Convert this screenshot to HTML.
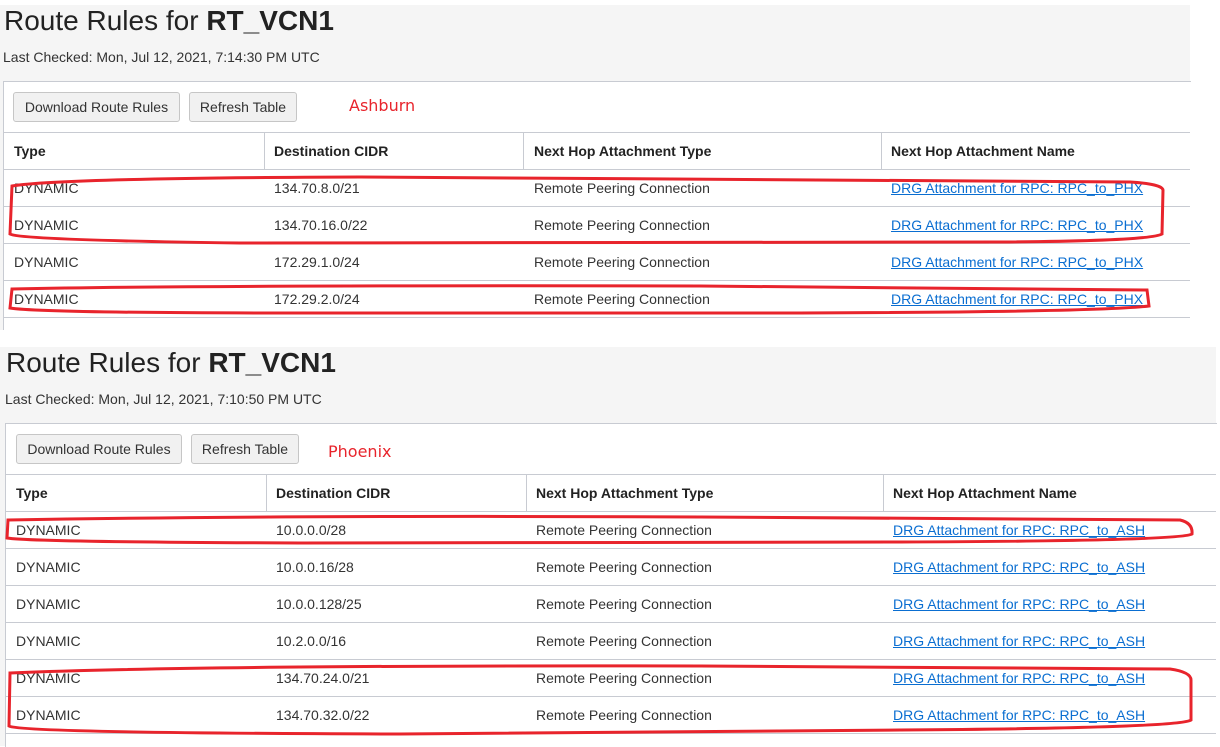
<!DOCTYPE html>
<html><head><style>
body{margin:0;width:1220px;height:746px;background:#fff;position:relative;overflow:hidden;font-family:"Liberation Sans",sans-serif;color:#333}
div,span,a{position:absolute}
.g{background:#f5f5f5}
.t{font-size:28px;color:#222;white-space:nowrap}
.lc{font-size:14px;color:#333;white-space:nowrap}
.box{background:#fff;border-left:1px solid #c8cbd2;border-top:1px solid #c8cbd2}
.btn{background:#f1f1f1;border:1px solid #c6c6c6;border-radius:3px;font-size:14px;color:#333;text-align:center;line-height:28px}
.hl{height:1px;background:#c8cbd2}
.vl{width:1px;background:#c8cbd2}
.c{font-size:14px;white-space:nowrap;line-height:16px;color:#333;margin-top:-1px}
.h{font-weight:bold;color:#222}
a.c{color:#0a6ed1;text-decoration:underline}
.red{font-family:"DejaVu Sans",sans-serif;color:#e8242c;font-size:16px}
</style></head><body>
<div class="g" style="left:0;top:5px;width:1190px;height:325px"></div>
<div class="t" style="left:4px;top:5px">Route Rules for <b>RT_VCN1</b></div>
<div class="lc" style="left:3px;top:49px">Last Checked: Mon, Jul 12, 2021, 7:14:30 PM UTC</div>
<div class="box" style="left:3px;top:81px;width:1187px;height:249px"></div>
<div class="btn" style="left:13px;top:92px;width:165px;height:28px">Download Route Rules</div>
<div class="btn" style="left:189px;top:92px;width:106px;height:28px">Refresh Table</div>
<div class="red" style="left:349px;top:96px">Ashburn</div>
<div class="hl" style="left:4px;top:132px;width:1186px"></div>
<div class="vl" style="left:264px;top:132px;height:37px"></div>
<div class="vl" style="left:523px;top:132px;height:37px"></div>
<div class="vl" style="left:881px;top:132px;height:37px"></div>
<div class="hl" style="left:4px;top:169px;width:1186px"></div>
<div class="hl" style="left:4px;top:206px;width:1186px"></div>
<div class="hl" style="left:4px;top:243px;width:1186px"></div>
<div class="hl" style="left:4px;top:280px;width:1186px"></div>
<div class="hl" style="left:4px;top:317px;width:1186px"></div>
<span class="c h" style="left:14px;top:144px">Type</span>
<span class="c h" style="left:274px;top:144px">Destination CIDR</span>
<span class="c h" style="left:534px;top:144px">Next Hop Attachment Type</span>
<span class="c h" style="left:891px;top:144px">Next Hop Attachment Name</span>

<span class="c" style="left:14px;top:181px">DYNAMIC</span><span class="c" style="left:274px;top:181px">134.70.8.0/21</span><span class="c" style="left:534px;top:181px">Remote Peering Connection</span><a class="c" style="left:891px;top:181px">DRG Attachment for RPC: RPC_to_PHX</a>
<span class="c" style="left:14px;top:218px">DYNAMIC</span><span class="c" style="left:274px;top:218px">134.70.16.0/22</span><span class="c" style="left:534px;top:218px">Remote Peering Connection</span><a class="c" style="left:891px;top:218px">DRG Attachment for RPC: RPC_to_PHX</a>
<span class="c" style="left:14px;top:255px">DYNAMIC</span><span class="c" style="left:274px;top:255px">172.29.1.0/24</span><span class="c" style="left:534px;top:255px">Remote Peering Connection</span><a class="c" style="left:891px;top:255px">DRG Attachment for RPC: RPC_to_PHX</a>
<span class="c" style="left:14px;top:292px">DYNAMIC</span><span class="c" style="left:274px;top:292px">172.29.2.0/24</span><span class="c" style="left:534px;top:292px">Remote Peering Connection</span><a class="c" style="left:891px;top:292px">DRG Attachment for RPC: RPC_to_PHX</a>

<div style="left:0;top:330px;width:1220px;height:17px;background:#fff"></div>
<div class="g" style="left:0;top:347px;width:1216px;height:399px"></div>
<div class="t" style="left:6px;top:347px">Route Rules for <b>RT_VCN1</b></div>
<div class="lc" style="left:5px;top:391px">Last Checked: Mon, Jul 12, 2021, 7:10:50 PM UTC</div>
<div class="box" style="left:5px;top:423px;width:1211px;height:323px"></div>
<div class="btn" style="left:16px;top:434px;width:164px;height:28px">Download Route Rules</div>
<div class="btn" style="left:191px;top:434px;width:106px;height:28px">Refresh Table</div>
<div class="red" style="left:328px;top:442px">Phoenix</div>
<div class="hl" style="left:6px;top:474px;width:1210px"></div>
<div class="vl" style="left:266px;top:474px;height:37px"></div>
<div class="vl" style="left:526px;top:474px;height:37px"></div>
<div class="vl" style="left:883px;top:474px;height:37px"></div>
<div class="hl" style="left:6px;top:511px;width:1210px"></div>
<div class="hl" style="left:6px;top:548px;width:1210px"></div>
<div class="hl" style="left:6px;top:585px;width:1210px"></div>
<div class="hl" style="left:6px;top:622px;width:1210px"></div>
<div class="hl" style="left:6px;top:659px;width:1210px"></div>
<div class="hl" style="left:6px;top:696px;width:1210px"></div>
<div class="hl" style="left:6px;top:733px;width:1210px"></div>
<span class="c h" style="left:16px;top:486px">Type</span>
<span class="c h" style="left:276px;top:486px">Destination CIDR</span>
<span class="c h" style="left:536px;top:486px">Next Hop Attachment Type</span>
<span class="c h" style="left:893px;top:486px">Next Hop Attachment Name</span>

<span class="c" style="left:16px;top:523px">DYNAMIC</span><span class="c" style="left:276px;top:523px">10.0.0.0/28</span><span class="c" style="left:536px;top:523px">Remote Peering Connection</span><a class="c" style="left:893px;top:523px">DRG Attachment for RPC: RPC_to_ASH</a>
<span class="c" style="left:16px;top:560px">DYNAMIC</span><span class="c" style="left:276px;top:560px">10.0.0.16/28</span><span class="c" style="left:536px;top:560px">Remote Peering Connection</span><a class="c" style="left:893px;top:560px">DRG Attachment for RPC: RPC_to_ASH</a>
<span class="c" style="left:16px;top:597px">DYNAMIC</span><span class="c" style="left:276px;top:597px">10.0.0.128/25</span><span class="c" style="left:536px;top:597px">Remote Peering Connection</span><a class="c" style="left:893px;top:597px">DRG Attachment for RPC: RPC_to_ASH</a>
<span class="c" style="left:16px;top:634px">DYNAMIC</span><span class="c" style="left:276px;top:634px">10.2.0.0/16</span><span class="c" style="left:536px;top:634px">Remote Peering Connection</span><a class="c" style="left:893px;top:634px">DRG Attachment for RPC: RPC_to_ASH</a>
<span class="c" style="left:16px;top:671px">DYNAMIC</span><span class="c" style="left:276px;top:671px">134.70.24.0/21</span><span class="c" style="left:536px;top:671px">Remote Peering Connection</span><a class="c" style="left:893px;top:671px">DRG Attachment for RPC: RPC_to_ASH</a>
<span class="c" style="left:16px;top:708px">DYNAMIC</span><span class="c" style="left:276px;top:708px">134.70.32.0/22</span><span class="c" style="left:536px;top:708px">Remote Peering Connection</span><a class="c" style="left:893px;top:708px">DRG Attachment for RPC: RPC_to_ASH</a>

<svg style="position:absolute;left:0;top:0" width="1220" height="746" fill="none" stroke="#e8242c" stroke-width="3">
<path d="M12 186 Q60 178 360 177 L1130 182 Q1162 184 1163 190 L1162 234 Q1150 241 1000 242 L240 243 Q20 240 10 234 Z"/>
<path d="M12 289 Q200 285 700 286 L1147 290 L1149 306 Q1100 312 800 313 L300 313 Q40 313 10 308 Z"/>
<path d="M8 520 Q300 515 700 517 L1180 520 Q1193 523 1192 534 Q1180 541 900 542 L300 543 Q30 542 7 538 Z"/>
<path d="M10 673 Q200 665 700 666 L1170 669 Q1191 672 1191 680 L1191 720 Q1180 728 900 730 L400 734 Q20 733 9 726 Z"/>
</svg>
</body></html>
